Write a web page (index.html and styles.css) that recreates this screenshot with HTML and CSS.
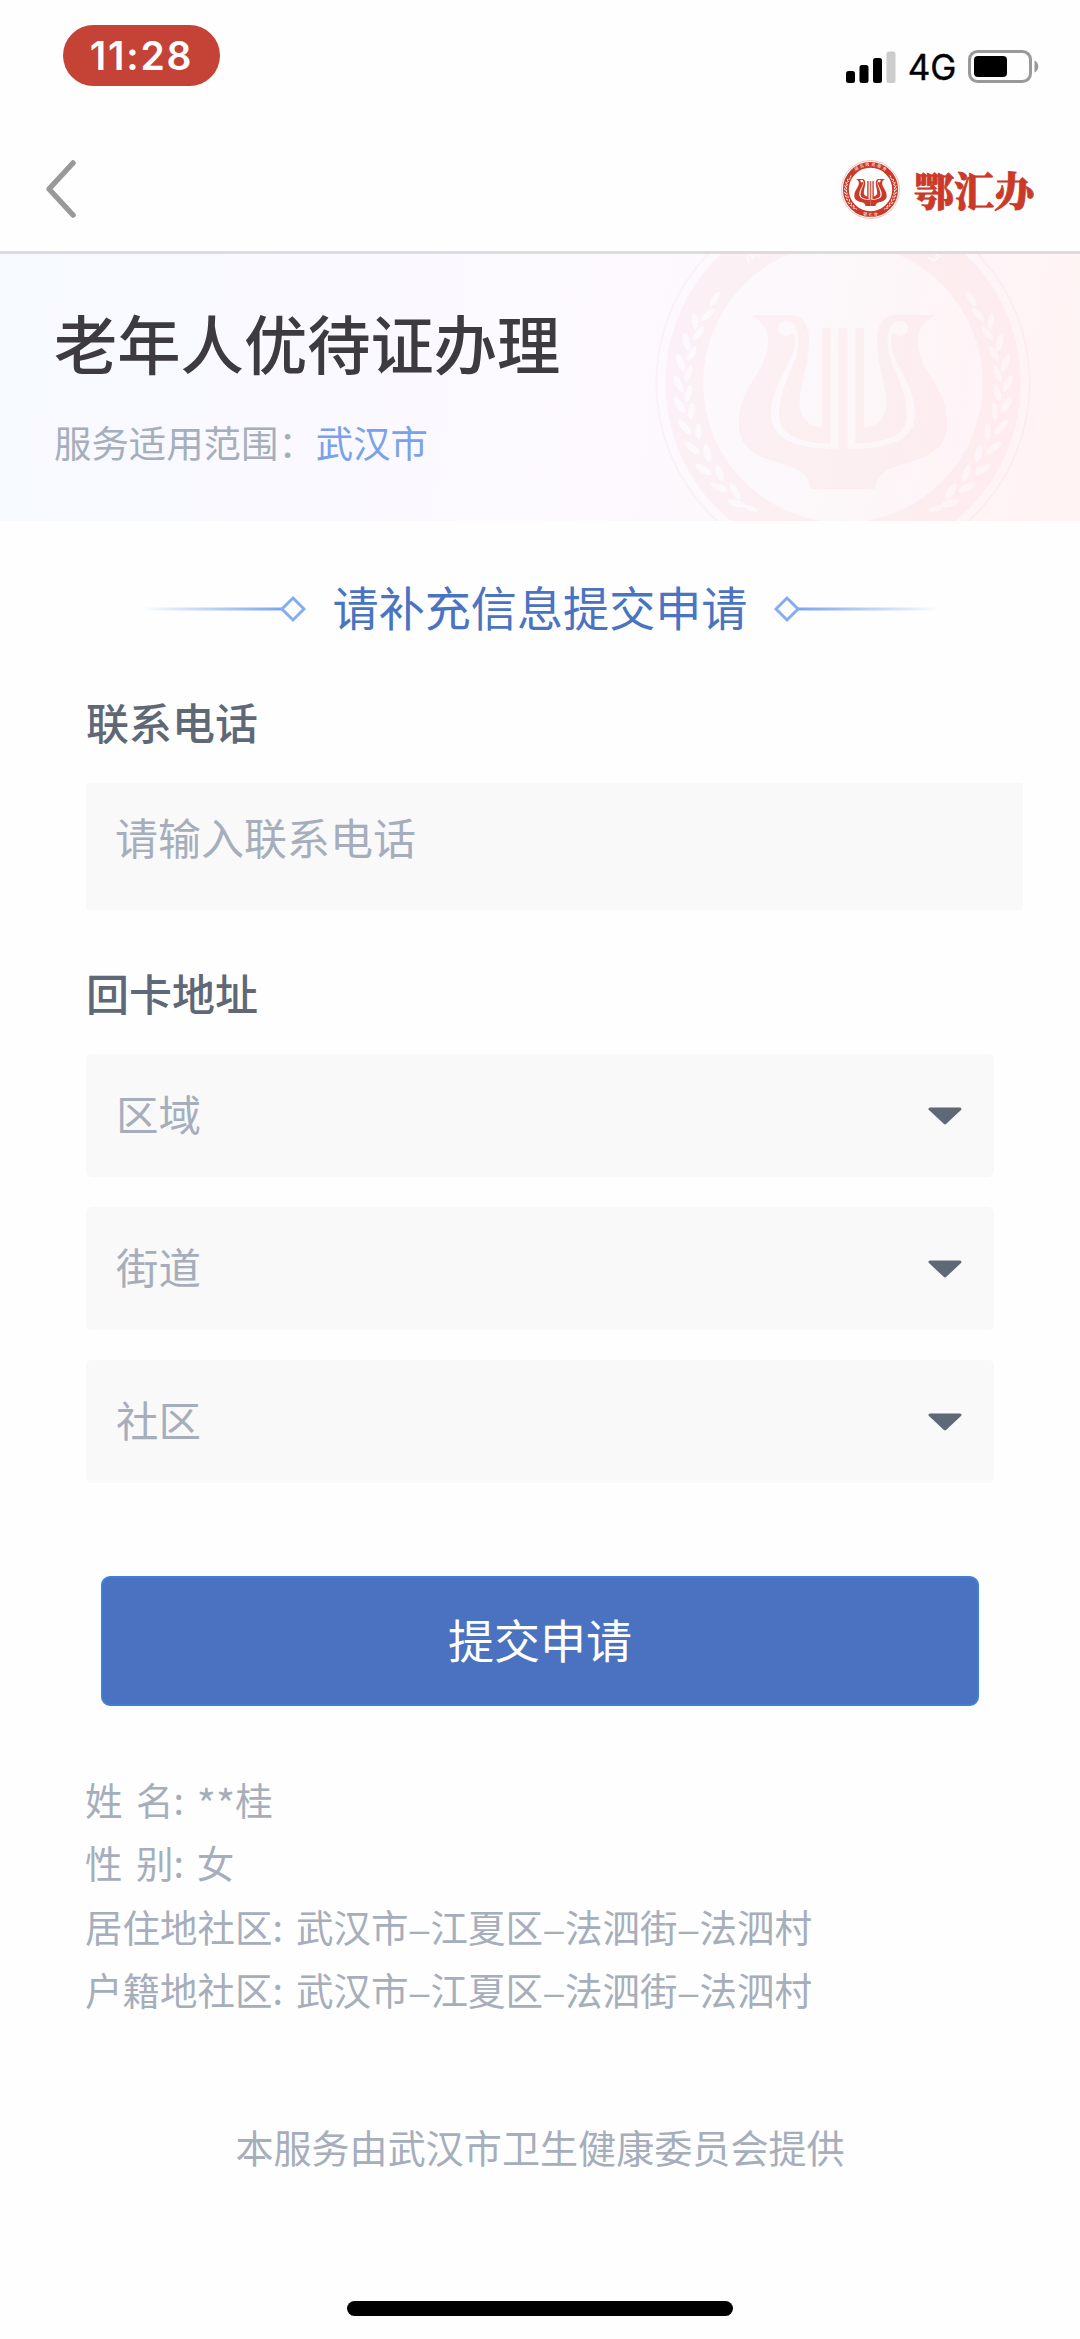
FILE: index.html
```
<!DOCTYPE html>
<html lang="zh-CN">
<head>
    <meta charset="UTF-8">
    <meta name="viewport" content="width=device-width, initial-scale=1.0">
    <title>老年人优待证办理</title>
    <link rel="stylesheet" href="styles.css">
</head>
<body>
    <!-- 徽标图形,顶栏和横幅共用 -->
    <svg class="defs" width="0" height="0" aria-hidden="true">
        <defs>
            <path id="arc-top" d="M212 430 A458 458 0 0 1 1128 430"/>
            <path id="arc-bottom" d="M155 430 A515 515 0 0 0 1185 430"/>
            <g id="wreath">
                <ellipse cx="285" cy="178" rx="9" ry="25" transform="rotate(32 285 178)"/>
                <ellipse cx="265" cy="225" rx="9" ry="25" transform="rotate(45 265 225)"/>
                <ellipse cx="226" cy="245" rx="9" ry="25" transform="rotate(-8 226 245)"/>
                <ellipse cx="237" cy="281" rx="9" ry="25" transform="rotate(38 237 281)"/>
                <ellipse cx="200" cy="307" rx="10" ry="27" transform="rotate(-14 200 307)"/>
                <ellipse cx="216" cy="342" rx="9" ry="25" transform="rotate(30 216 342)"/>
                <ellipse cx="183" cy="370" rx="10" ry="28" transform="rotate(-22 183 370)"/>
                <ellipse cx="206" cy="402" rx="9" ry="25" transform="rotate(22 206 402)"/>
                <ellipse cx="176" cy="432" rx="10" ry="28" transform="rotate(-28 176 432)"/>
                <ellipse cx="207" cy="460" rx="9" ry="25" transform="rotate(14 207 460)"/>
                <ellipse cx="180" cy="496" rx="10" ry="28" transform="rotate(-34 180 496)"/>
                <ellipse cx="215" cy="515" rx="9" ry="25" transform="rotate(6 215 515)"/>
                <ellipse cx="195" cy="562" rx="10" ry="28" transform="rotate(-42 195 562)"/>
                <ellipse cx="236" cy="575" rx="9" ry="25" transform="rotate(-2 236 575)"/>
                <ellipse cx="218" cy="625" rx="10" ry="28" transform="rotate(-52 218 625)"/>
                <ellipse cx="263" cy="640" rx="10" ry="27" transform="rotate(-12 263 640)"/>
                <ellipse cx="252" cy="690" rx="10" ry="28" transform="rotate(-58 252 690)"/>
                <ellipse cx="300" cy="700" rx="10" ry="27" transform="rotate(-20 300 700)"/>
                <ellipse cx="298" cy="743" rx="10" ry="28" transform="rotate(-66 298 743)"/>
                <ellipse cx="346" cy="755" rx="10" ry="27" transform="rotate(-32 346 755)"/>
                <ellipse cx="350" cy="791" rx="10" ry="27" transform="rotate(-74 350 791)"/>
                <ellipse cx="392" cy="806" rx="7" ry="22" transform="rotate(-70 392 806)"/>
            </g>
            <path id="lyre-half" d="M392 226 H515 C550 226 568 260 568 300 C568 380 540 430 540 495 C542 535 570 562 607 563 V268 Q607 264 613 264 H627 Q633 264 633 268 V612 C530 610 478 580 478 530 C478 430 536 380 536 305 C536 262 520 243 497 243 A23 23 0 1 0 516 280 C523 283 526 290 526 305 C526 370 454 430 454 525 C456 600 530 628 656 627 V268 Q656 264 662 264 H671 V748 H574 C568 710 545 688 505 678 C430 655 357 640 357 550 C357 440 445 395 445 305 C445 262 420 240 392 226 Z"/>
            <mask id="ring-mask" maskUnits="userSpaceOnUse" x="100" y="-140" width="1140" height="1140">
                <rect x="100" y="-140" width="1140" height="1140" fill="#fff"/>
                <use href="#wreath"/>
                <use href="#wreath" transform="translate(1340 0) scale(-1 1)"/>
                <text class="ring-text"><textPath href="#arc-top" startOffset="51%" text-anchor="middle">湖北政务服务</textPath></text>
                <text class="ring-text"><textPath href="#arc-bottom" startOffset="51%" text-anchor="middle">鄂汇办</textPath></text>
            </mask>
            <symbol id="emblem" viewBox="100 -140 1140 1140">
                <circle cx="670" cy="430" r="560" fill="none" stroke="currentColor" stroke-width="6"/>
                <circle cx="670" cy="430" r="476" fill="none" stroke="currentColor" stroke-width="114" mask="url(#ring-mask)"/>
                <use href="#lyre-half" fill="currentColor"/>
                <use href="#lyre-half" fill="currentColor" transform="translate(1340 0) scale(-1 1)"/>
            </symbol>
        </defs>
    </svg>

    <header class="top">
        <div class="status-bar">
            <span class="time">11:28</span>
            <div class="status-icons">
                <svg class="signal" viewBox="0 0 50 32">
                    <rect x="0" y="20" width="9" height="12" rx="2.5"/>
                    <rect x="13.5" y="14" width="9" height="18" rx="2.5"/>
                    <rect x="27" y="7" width="9" height="25" rx="2.5"/>
                    <rect x="40.5" y="0.5" width="9" height="31.5" rx="2.5" fill="#ccc"/>
                </svg>
                <span class="network">4G</span>
                <svg class="battery" viewBox="0 0 72 34">
                    <rect x="1.5" y="1.5" width="61" height="30" rx="8" fill="none" stroke="#999" stroke-width="3"/>
                    <rect x="6" y="6" width="33" height="21" rx="4"/>
                    <path d="M66.500 10.500 C71.500 12.500 71.500 20.500 66.500 22.500 Z" fill="#999"/>
                </svg>
            </div>
        </div>
        <nav class="nav-bar">
            <svg class="back" viewBox="0 0 32 60">
                <path d="M28 4 L4 30 L28 56" fill="none" stroke="#999" stroke-width="5.500" stroke-linecap="round" stroke-linejoin="round"/>
            </svg>
            <div class="brand">
                <svg class="brand-logo"><use href="#emblem"/></svg>
                <span class="brand-name">鄂汇办</span>
            </div>
        </nav>
    </header>

    <section class="banner">
        <svg class="banner-emblem"><use href="#emblem"/></svg>
        <h1>老年人优待证办理</h1>
        <p>服务适用范围：<span class="city">武汉市</span></p>
    </section>

    <main>
        <h2 class="section-title">
            <svg class="deco" viewBox="0 0 166 28">
                <defs>
                    <linearGradient id="fade">
                        <stop offset="0" stop-color="#7aa5ec" stop-opacity="0"/>
                        <stop offset="1" stop-color="#7aa5ec"/>
                    </linearGradient>
                </defs>
                <rect x="0" y="12.500" width="142" height="3" fill="url(#fade)"/>
                <path d="M153 3 L164 14 L153 25 L142 14 Z" fill="none" stroke="#84adf0" stroke-width="3"/>
            </svg>
            <span>请补充信息提交申请</span>
            <svg class="deco deco-right" viewBox="0 0 166 28">
                <rect x="0" y="12.500" width="142" height="3" fill="url(#fade)"/>
                <path d="M153 3 L164 14 L153 25 L142 14 Z" fill="none" stroke="#84adf0" stroke-width="3"/>
            </svg>
        </h2>

        <form class="form">
            <label class="label" for="phone">联系电话</label>
            <input class="phone" id="phone" type="tel" placeholder="请输入联系电话">

            <div class="label label-address">回卡地址</div>
            <div class="selects">
                <div class="select">区域<svg class="arrow" viewBox="0 0 34 18"><path d="M2 2 H32 L17 16 Z"/></svg></div>
                <div class="select">街道<svg class="arrow" viewBox="0 0 34 18"><path d="M2 2 H32 L17 16 Z"/></svg></div>
                <div class="select">社区<svg class="arrow" viewBox="0 0 34 18"><path d="M2 2 H32 L17 16 Z"/></svg></div>
            </div>

            <button class="submit" type="button">提交申请</button>
        </form>

        <div class="info">
            <p><span class="key">姓 名:</span><span class="stars">**</span>桂</p>
            <p><span class="key">性 别:</span>女</p>
            <p><span class="key">居住地社区:</span>武汉市<i>–</i>江夏区<i>–</i>法泗街<i>–</i>法泗村</p>
            <p><span class="key">户籍地社区:</span>武汉市<i>–</i>江夏区<i>–</i>法泗街<i>–</i>法泗村</p>
        </div>
    </main>

    <footer>
        <p>本服务由武汉市卫生健康委员会提供</p>
        <div class="home-bar"></div>
    </footer>
</body>
</html>
```
FILE: styles.css
```
* { box-sizing: border-box; margin: 0; padding: 0; }
body { width: 1080px; height: 2339px; overflow: hidden; background: #fefefe; font-family: "Noto Sans CJK SC", sans-serif; display: flex; flex-direction: column; }
svg { display: block; flex: none; }
.defs { position: absolute; }
.ring-text { font-size: 78px; font-weight: 500; letter-spacing: 31px; }

/* 状态栏 + 导航栏 */
.top { height: 254px; border-bottom: 3px solid #dcdcdd; }
.status-bar { height: 125px; padding: 25px 40px 0 63px; display: flex; justify-content: space-between; align-items: flex-start; }
.time { width: 157px; height: 61px; border-radius: 31px; background: #c44236; color: #fff; font: 600 39px/62px Inter, sans-serif; letter-spacing: 1.8px; text-align: center; }
.status-icons { display: flex; align-items: center; padding-top: 25px; }
.signal { width: 50px; height: 32px; }
.network { width: 72px; font: 400 35px/32px Inter, sans-serif; text-align: center; -webkit-text-stroke: 0.4px #000; }
.battery { width: 72px; height: 34px; }
.nav-bar { height: 126px; padding: 2px 46px 0 45px; display: flex; justify-content: space-between; align-items: center; }
.back { width: 32px; height: 60px; }
.brand { display: flex; align-items: center; gap: 14px; color: #cb3a28; }
.brand-logo { width: 59px; height: 59px; }
.brand-name { font: 900 40px/58px "Noto Serif CJK SC", "Noto Sans CJK SC", serif; -webkit-text-stroke: 0.8px #cb3a28; }

/* 横幅 */
.banner { position: relative; height: 267px; padding: 54px 54px 0; overflow: hidden; background: linear-gradient(98deg, #f6faff 0%, #faf9ff 28%, #fdf9ff 55%, #fcf7f9 78%, #fff4f7 90%, #fff3f3 100%); }
.banner-emblem { position: absolute; left: 653px; top: -61px; width: 380px; height: 380px; color: #f04a50; opacity: 0.04; }
.banner h1 { font-size: 63.3px; font-weight: 500; line-height: 68px; color: #3d3b40; }
.banner p { margin-top: 39px; font-size: 37.4px; line-height: 54px; color: #a6aebc; }
.city { color: #7aa2ea; }

.section-title { margin-top: 56px; display: flex; justify-content: center; align-items: center; gap: 27px; font-size: 46.1px; font-weight: 400; line-height: 60px; color: #4a73c1; }
.section-title span { position: relative; top: -1px; }
.deco { width: 166px; height: 28px; margin-top: 4px; }
.deco-right { transform: scaleX(-1); }

/* 表单 */
.form { padding: 0 86px; }
.label { display: block; margin-top: 54px; font-size: 43px; font-weight: 500; line-height: 60px; color: #5f6877; }
.phone { display: block; width: 937px; height: 127px; margin-top: 32px; padding: 0 29px 21px; border: 0; border-radius: 3px; background: #f9f9f9; font: 400 43px "Noto Sans CJK SC", sans-serif; }
.phone::placeholder { color: #a6aebc; opacity: 1; }
.label-address { margin-top: 52px; }
.selects { margin-top: 32px; display: flex; flex-direction: column; gap: 30px; }
.select { height: 123px; padding: 0 32px 7px 30px; display: flex; justify-content: space-between; align-items: center; border-radius: 6px; background: #f9f9f9; font-size: 42.5px; color: #a6aebc; }
.arrow { width: 34px; height: 18px; margin-top: 8px; }
.arrow path { fill: #5f6877; stroke: #5f6877; stroke-width: 3; stroke-linejoin: round; }
.submit { display: block; width: 878px; height: 130px; margin: 93px 0 0 15px; padding-bottom: 7px; border: 2px solid #4080d8; border-radius: 9px; background: #4a72c0; color: #fff; font: 400 46px "Noto Sans CJK SC", sans-serif; }

.info { margin-top: 61px; padding-left: 85px; font-size: 37.5px; line-height: 63.3px; color: #a6aebc; }
.key { margin-right: 13px; word-spacing: 5px; }
.stars { position: relative; top: 5px; font-size: 41px; line-height: 1; }
.info i { display: inline-block; width: 22px; font: 400 35px/1 "Liberation Sans", sans-serif; text-align: center; }

footer { margin-top: auto; padding-bottom: 23px; display: flex; flex-direction: column; align-items: center; }
footer p { font-size: 38.1px; line-height: 60px; color: #a6aebc; }
.home-bar { width: 386px; height: 15px; margin-top: 124px; border-radius: 8px; background: #000; }
```
